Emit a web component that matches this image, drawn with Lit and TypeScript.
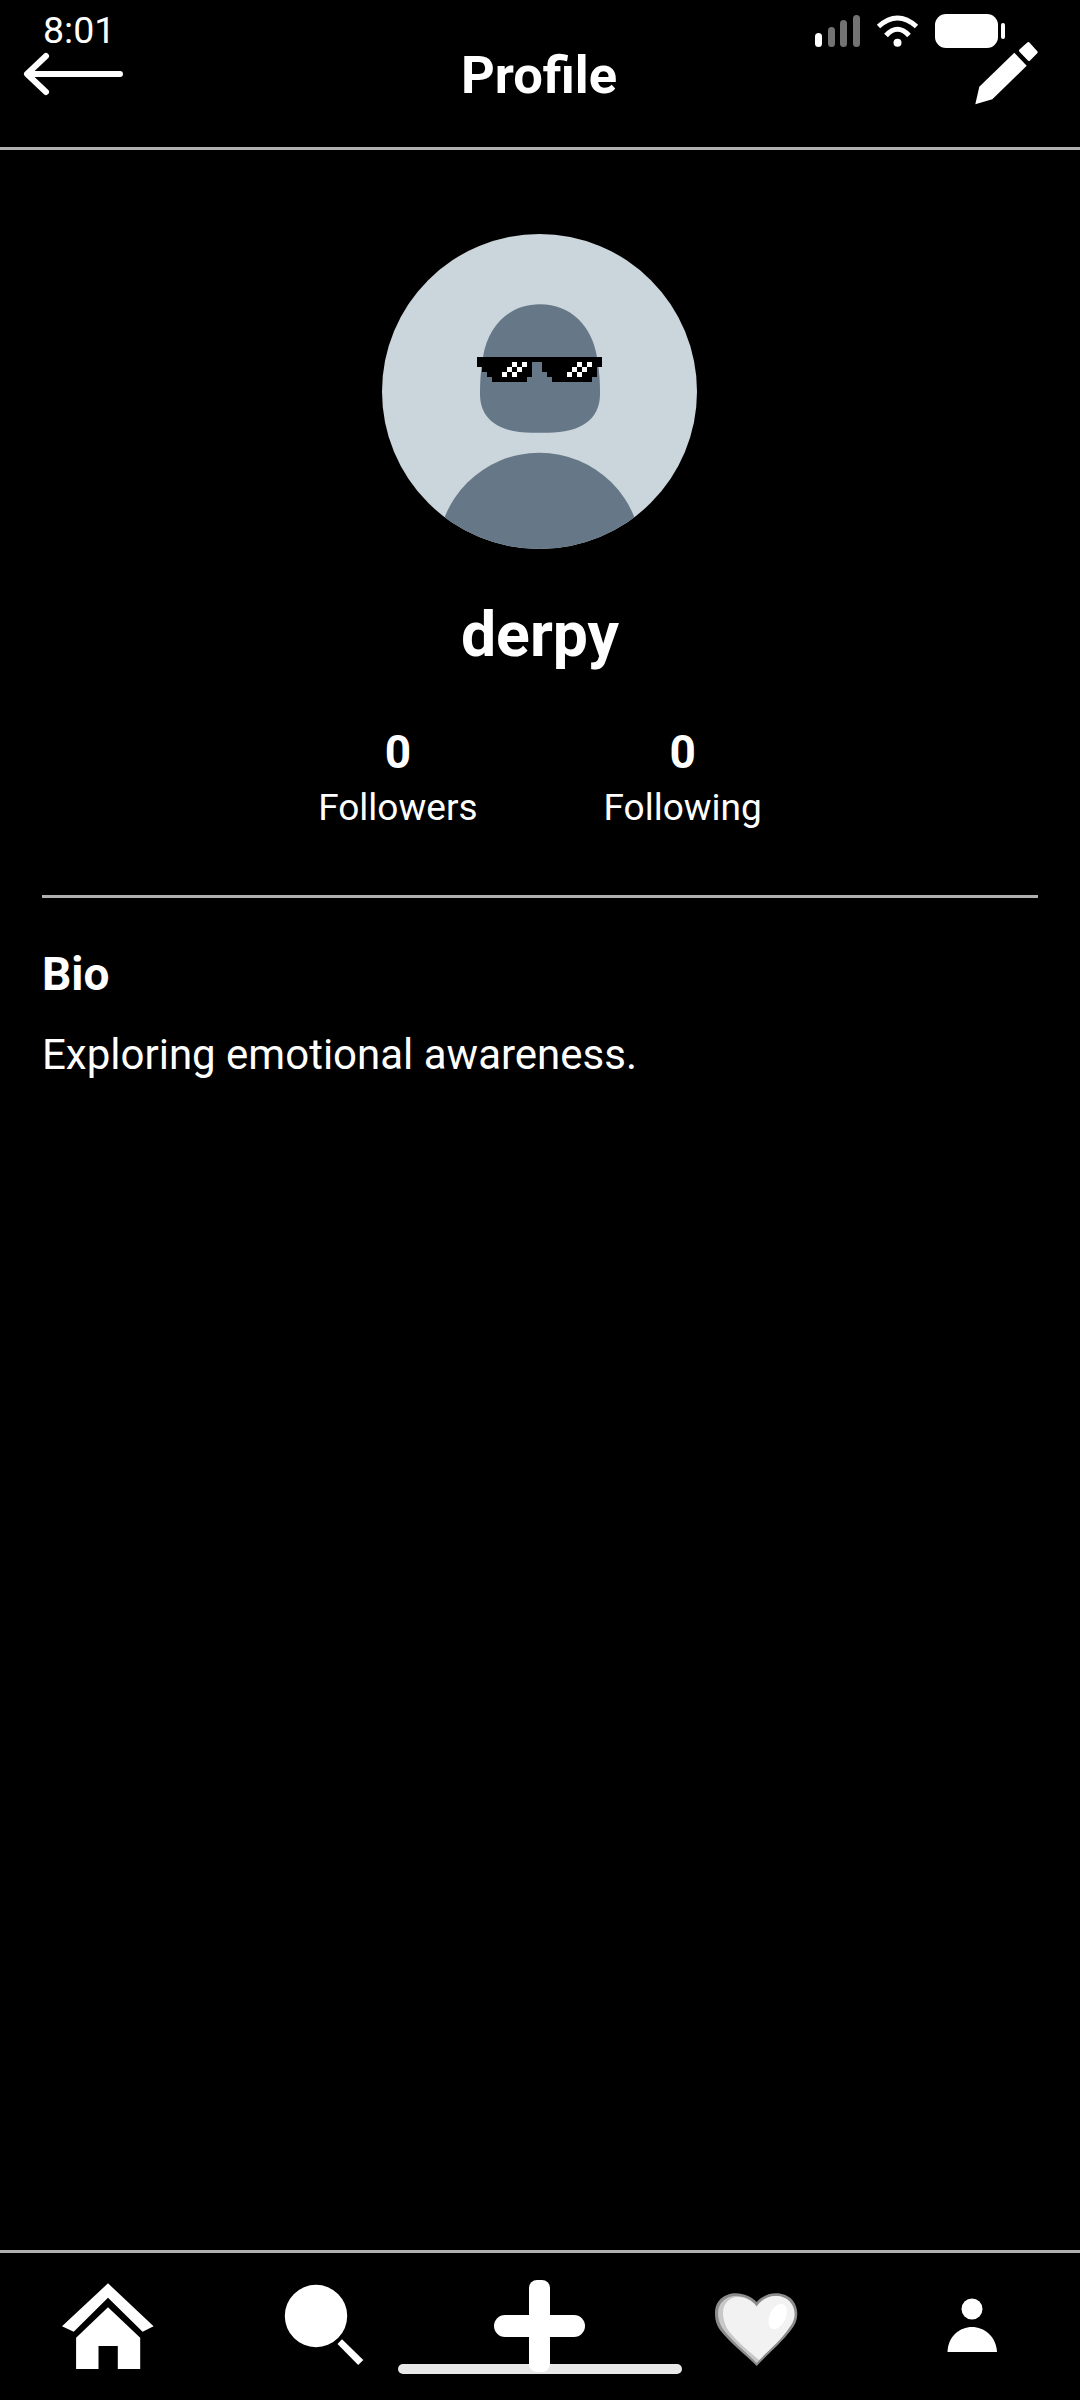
import { LitElement, html, css, svg } from 'lit'
import { customElement } from 'lit/decorators.js'

// 25 x 5 pixel grid for the sunglasses: # black, o white, . nothing
const GLASSES = [
  '#########################',
  '#######o#o#..#######o#o##',
  '.#####o#o##..######o#o##.',
  '..###o#o###...####o#o###.',
  '...#######.....########..'
]

@customElement('app-root')
export class AppRoot extends LitElement {
  static styles = css`
    :host {
      display: block;
      width: 1080px;
      height: 2400px;
      background: #000;
      color: #fff;
      font-family: Roboto, sans-serif;
    }

    .page {
      position: relative;
      display: flex;
      flex-direction: column;
      height: 2400px;
    }

    .status {
      position: absolute;
      top: 0;
      left: 0;
      right: 0;
      height: 60px;
    }

    .time {
      position: absolute;
      left: 43px;
      top: 9px;
      font-size: 37.5px;
      line-height: 42px;
    }

    .status-icons {
      position: absolute;
      left: 810px;
      top: 10px;
    }

    header {
      display: grid;
      grid-template-columns: 1fr auto 1fr;
      align-items: center;
      height: 147px;
      padding: 0 22px;
      border-bottom: 3px solid #b0b0b0;
    }

    header h1 {
      margin: 2px 2px 0 0;
      font-size: 52.5px;
      line-height: 60px;
      font-weight: 700;
    }

    .edit {
      justify-self: end;
      margin-right: 16px;
    }

    main {
      flex: 1;
      display: flex;
      flex-direction: column;
      align-items: center;
      padding: 84px 42px 0;
    }

    .avatar {
      display: block;
      margin-right: 1px;
    }

    .name {
      margin: 51px 0 0;
      font-size: 62.5px;
      line-height: 70px;
      font-weight: 700;
    }

    .stats {
      display: flex;
      gap: 126px;
      margin-top: 55px;
    }

    .stat {
      display: flex;
      flex-direction: column;
      align-items: center;
      gap: 8px;
    }

    .stat b {
      font-size: 46px;
      line-height: 54px;
      font-weight: 700;
    }

    .stat span {
      font-size: 37px;
      line-height: 42px;
    }

    .bio {
      align-self: stretch;
      margin-top: 66px;
      border-top: 3px solid #b0b0b0;
      padding-top: 50px;
    }

    .bio h2 {
      margin: 0;
      font-size: 46px;
      line-height: 52px;
      font-weight: 700;
    }

    .bio p {
      margin: 31px 0 0;
      font-size: 42px;
      line-height: 48px;
    }

    nav {
      position: relative;
      display: grid;
      grid-template-columns: repeat(5, 1fr);
      justify-items: center;
      height: 150px;
      padding-top: 23px;
      box-sizing: border-box;
      border-top: 3px solid #b0b0b0;
    }

    nav svg {
      position: relative;
      display: block;
    }

    .home-bar {
      position: absolute;
      left: 398px;
      top: 111px;
      width: 284px;
      height: 10px;
      border-radius: 5px;
      background: #e8e8e8;
    }
  `

  renderGlasses () {
    const cells = []
    GLASSES.forEach((row, y) => {
      ;[...row].forEach((c, x) => {
        if (c === '.') return
        cells.push(svg`<rect x=${95 + x * 5} y=${123 + y * 5} width="5" height="5" fill=${c === '#' ? '#000' : '#fff'} shape-rendering="crispEdges" />`)
      })
    })
    return cells
  }

  renderAvatar () {
    return html`
      <svg class="avatar" width="315" height="315" viewBox="0 0 315 315">
        <defs><clipPath id="disc"><circle cx="157.5" cy="157.5" r="157.5" /></clipPath></defs>
        <circle cx="157.5" cy="157.5" r="157.5" fill="#cbd5dc" />
        <g clip-path="url(#disc)" fill="#667788">
          <path d="M158 70.3C127 70.3 106 92 101 123C99 135 98 145 98 160C98 186 118 198.7 150 198.7L166 198.7C198 198.7 218 186 218 160C218 145 217 135 215 123C210 92 189 70.3 158 70.3Z" />
          <circle cx="157.5" cy="320.7" r="102" />
        </g>
        ${this.renderGlasses()}
      </svg>
    `
  }

  render () {
    return html`
      <div class="page">
        <header>
          <svg width="104" height="48" viewBox="0 0 104 48" fill="none" stroke="#fff" stroke-width="6" stroke-linecap="round" stroke-linejoin="round">
            <path d="M6 24H98M24 6L5 24L24 42" />
          </svg>
          <h1>Profile</h1>
          <svg class="edit" width="72" height="72" viewBox="0 0 72 72" fill="#fff">
            <path d="M44.3 14.7L56.7 27.7L22.3 61.3L5.3 66.3L9.3 48.7Z" />
            <path d="M50.5 12.7L58.3 5.5L66.2 14.3L59 21.5Z" stroke="#fff" stroke-width="3" stroke-linejoin="round" />
          </svg>
        </header>

        <div class="status">
          <span class="time">8:01</span>
          <svg class="status-icons" width="200" height="44" viewBox="0 0 200 44">
            <rect x="5" y="23" width="7" height="14" rx="3.5" fill="#fff" />
            <rect x="18" y="17" width="7" height="20" rx="3.5" fill="#737373" />
            <rect x="30" y="10" width="7" height="27" rx="3.5" fill="#737373" />
            <rect x="43" y="5" width="7" height="32" rx="3.5" fill="#737373" />
            <g fill="none" stroke="#fff" stroke-width="5">
              <path d="M68.5 16.5Q87.5 -0.5 106.5 16.5" />
              <path d="M76 25.5Q87.5 13 99 25.5" />
            </g>
            <circle cx="87.5" cy="32.7" r="4" fill="#fff" />
            <rect x="125" y="4" width="63" height="34" rx="11" fill="#fff" />
            <rect x="191" y="13" width="4" height="16" rx="2" fill="#fff" />
          </svg>
        </div>

        <main>
          ${this.renderAvatar()}
          <h2 class="name">derpy</h2>
          <div class="stats">
            <div class="stat"><b>0</b><span>Followers</span></div>
            <div class="stat"><b>0</b><span>Following</span></div>
          </div>
          <section class="bio">
            <h2>Bio</h2>
            <p>Exploring emotional awareness.</p>
          </section>
        </main>

        <nav>
          <div class="home-bar"></div>
          <svg width="100" height="100" viewBox="0 0 100 100" fill="#fff">
            <path d="M50 7.3L95.6 50.3L84.6 55.7L50 21.7L15.7 55.7L4 50.3Z" />
            <path d="M50 31.3L82.2 61.7V93H59.8V70H40.5V93H18.1V61.7Z" />
          </svg>
          <svg width="100" height="100" viewBox="0 0 100 100" fill="#fff">
            <circle cx="42" cy="40" r="31.2" />
            <path d="M68 63.3L63.5 68L84.2 89L89.3 84Z" />
          </svg>
          <svg width="100" height="100" viewBox="0 0 100 100" fill="#fff">
            <rect x="4" y="39" width="91" height="22" rx="11" />
            <rect x="39" y="4" width="21" height="92" rx="8" />
          </svg>
          <svg width="100" height="100" viewBox="0 0 100 100">
            <path fill="#8c8c8c" d="M50.7 90C40 79 24 67 14 54C10 48 9 43 9 37C9 25 18 17.3 30 17.3C38 17.3 46 21 50.7 26C55 21 62 17.3 70 17.3C83 17.3 91.3 26 91.3 38C91.3 44 89 49 85 54C76 66 61 79 50.7 90Z" />
            <path fill="#c8c8c8" d="M50.7 87C40 76 26 65 17 53C13 47 12 41 12 37C12 27 20 20 30 20C38 20 46 24 50.7 30C55 24 62 20 70 20C81 20 88.5 28 88.5 38C88.5 44 86 48 83 52C74 65 60 76 50.7 87Z" />
            <path fill="#f2f2f2" d="M53 84C44 76 30 65 22 54C18 47 17 41 17 37C17 28 23 21 32 21C39 21 46 24 50.7 31C55 24 62 20 70 20C81 20 88.5 28 88.5 38C88.5 44 86 48 83 52C75 64 62 75 53 84Z" />
            <ellipse cx="71.7" cy="40.5" rx="8" ry="13.5" transform="rotate(25 71.7 40.5)" fill="#fff" />
          </svg>
          <svg width="100" height="100" viewBox="0 0 100 100" fill="#fff">
            <circle cx="50" cy="33" r="10.5" />
            <path d="M25.5 76C26 60 38 51 50 51C62 51 74 60 75 76Z" />
          </svg>
        </nav>
      </div>
    `
  }
}
